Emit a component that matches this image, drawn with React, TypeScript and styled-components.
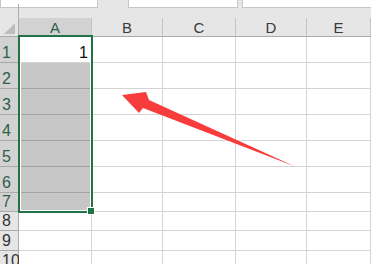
import * as React from 'react';
import styled, { createGlobalStyle } from 'styled-components';

const GlobalStyle = createGlobalStyle`
    html, body{
        margin: 0;
        padding: 0;
        background: #ffffff;
        overflow: hidden;
    }
`;

const COLS = '19px 73px 71px 73px 71px 1fr';
const GREEN = '#217346';

const Sheet = styled.div`
    position: relative;
    width: 371px;
    height: 264px;
    overflow: hidden;
    background: #e6e6e6;
    font-family: "Liberation Sans", Arial, sans-serif;
`;

const TopStrip = styled.div`
    display: flex;
    height: 8px;
    gap: 0;
`;

const Field = styled.div<{ $w: number; $ml?: number }>`
    width: ${p => p.$w}px;
    margin-left: ${p => p.$ml ?? 0}px;
    flex: 0 0 auto;
    background: #ffffff;
    border: 1px solid #c6c6c6;
    border-top: none;
    box-sizing: border-box;
`;

const Spacer = styled.div`
    height: 10px;
`;

const HeaderRow = styled.div`
    display: grid;
    grid-template-columns: ${COLS};
    height: 19px;
    box-sizing: border-box;
    border-bottom: 1px solid #ababab;
`;

const Corner = styled.div`
    display: flex;
    align-items: flex-end;
    justify-content: flex-end;
    padding: 0 3px 2px 0;
    margin-top: -14px;
    border-right: 1px solid #ababab;
`;

const ColHead = styled.div<{ $sel?: boolean }>`
    display: flex;
    align-items: flex-end;
    justify-content: center;
    background: ${p => (p.$sel ? '#d2d2d2' : '#e6e6e6')};
    color: ${p => (p.$sel ? '#2f5d48' : '#3a3a3a')};
    border-right: 1px solid #c4c4c4;
    font-size: 15px;
    line-height: 17px;
`;

const Body = styled.div`
    display: grid;
    grid-template-columns: ${COLS};
    grid-template-rows: 26px 26px 26px 26px 26px 26px 19px 19px 20px 20px;
    background: #ffffff;
`;

const RowHead = styled.div<{ $sel?: boolean }>`
    box-sizing: border-box;
    display: flex;
    align-items: flex-end;
    padding-left: 2px;
    background: ${p => (p.$sel ? '#d2d2d2' : '#e6e6e6')};
    color: ${p => (p.$sel ? '#2f5d48' : '#333333')};
    border-right: 1px solid #ababab;
    border-bottom: 1px solid #ababab;
    font-size: 16px;
    line-height: 18px;
`;

const Cell = styled.div<{ $sel?: boolean }>`
    box-sizing: border-box;
    display: flex;
    align-items: flex-end;
    justify-content: flex-end;
    padding-right: 3px;
    background: ${p => (p.$sel ? '#c6c6c6' : '#ffffff')};
    border-right: 1px solid #d4d4d4;
    border-bottom: 1px solid ${p => (p.$sel ? '#a3a3a3' : '#d4d4d4')};
    color: #111111;
    font-size: 16px;
    line-height: 18px;
`;

const Selection = styled.div`
    position: absolute;
    left: 18px;
    top: 35px;
    width: 75px;
    height: 178px;
    box-sizing: border-box;
    border: 2px solid ${GREEN};
    box-shadow: inset 0 0 0 1px #ffffff;
    pointer-events: none;
`;

const FillHandle = styled.div`
    position: absolute;
    left: 88px;
    top: 208px;
    width: 6px;
    height: 6px;
    background: ${GREEN};
    outline: 1px solid #ffffff;
`;

const Annotation = styled.svg`
    position: absolute;
    left: 0;
    top: 0;
    pointer-events: none;
`;

const columns = ['A', 'B', 'C', 'D', 'E'];
const rows = [1, 2, 3, 4, 5, 6, 7, 8, 9, 10];

function App() {
    return (
        <>
            <GlobalStyle />
            <Sheet>
                <TopStrip>
                    <Field $w={98} />
                    <Field $w={110} $ml={30} />
                    <Field $w={130} $ml={4} />
                </TopStrip>
                <Spacer />
                <HeaderRow>
                    <Corner>
                        <svg width="11" height="11" viewBox="0 0 11 11">
                            <polygon points="0,11 11,0 11,11" fill="#bdbdbd" />
                        </svg>
                    </Corner>
                    {columns.map(c => (
                        <ColHead key={c} $sel={c === 'A'}>{c}</ColHead>
                    ))}
                </HeaderRow>
                <Body>
                    {rows.map(r => (
                        <React.Fragment key={r}>
                            <RowHead $sel={r <= 7}>{r}</RowHead>
                            {columns.map(c => (
                                <Cell key={c} $sel={c === 'A' && r >= 2 && r <= 7}>
                                    {c === 'A' && r === 1 ? '1' : ''}
                                </Cell>
                            ))}
                        </React.Fragment>
                    ))}
                </Body>
                <Selection />
                <FillHandle />
                <Annotation width="371" height="264" viewBox="0 0 371 264">
                    <polygon
                        points="122,95 146,92 149,100 295,166.5 143,108 139,113"
                        fill="#f83c3c"
                    />
                </Annotation>
            </Sheet>
        </>
    );
}

export default App;
